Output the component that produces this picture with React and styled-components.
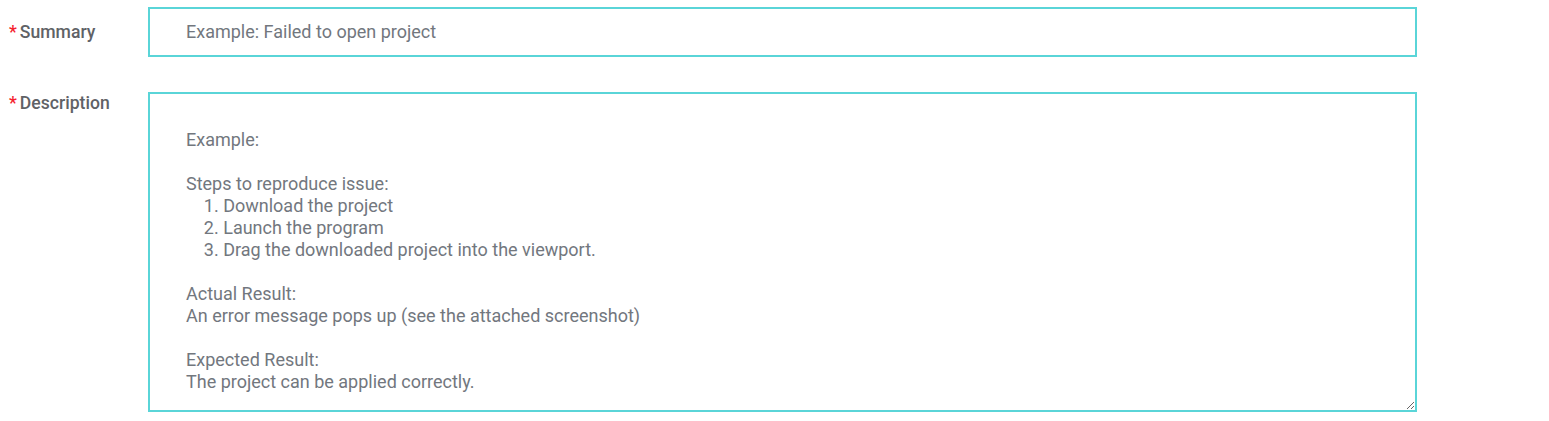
import React from "react";
import styled, { createGlobalStyle } from "styled-components";

const Global = createGlobalStyle`
  html, body { margin: 0; padding: 0; background: #fff; }
  body { font-family: Roboto, "Noto Sans", sans-serif; }
`;

const Form = styled.form`
  display: flex;
  flex-direction: column;
  gap: 35px;
  padding: 7px 0 0 9px;
`;

const Row = styled.div`
  display: flex;
  align-items: ${(p) => (p.$top ? "flex-start" : "center")};
`;

const Label = styled.label`
  width: 139px;
  flex: none;
  font-size: 17.6px;
  font-weight: 500;
  color: #5f6266;
  padding-top: ${(p) => p.$pt || 0}px;
  margin-top: ${(p) => p.$mt || 0}px;
  display: flex;
  align-items: baseline;
`;

const Star = styled.span`
  color: #f5222d;
  margin-right: 3px;
`;

const fieldBase = `
  box-sizing: border-box;
  width: 1269px;
  border: 2px solid #5ad5d8;
  border-radius: 0;
  outline: none;
  background: #fff;
  font-family: Roboto, "Noto Sans", sans-serif;
  font-size: 18px;
  color: #6f757c;
  &::placeholder { color: #72777e; opacity: 1; }
`;

const Input = styled.input`
  ${fieldBase}
  height: 50px;
  padding: 0 36px 2px;
`;

const TextArea = styled.textarea`
  ${fieldBase}
  height: 320px;
  padding: 13px 36px 16px;
  line-height: 22px;
  resize: vertical;
`;

const placeholder = `
Example:

Steps to reproduce issue:
    1. Download the project
    2. Launch the program
    3. Drag the downloaded project into the viewport.

Actual Result:
An error message pops up (see the attached screenshot)

Expected Result:
The project can be applied correctly.`;

export default function App() {
  return (
    <>
      <Global />
      <Form>
        <Row>
          <Label>
            <Star>*</Star>Summary
          </Label>
          <Input placeholder="Example: Failed to open project" />
        </Row>
        <Row $top>
          <Label $pt={1}>
            <Star>*</Star>Description
          </Label>
          <TextArea placeholder={placeholder} />
        </Row>
      </Form>
    </>
  );
}
